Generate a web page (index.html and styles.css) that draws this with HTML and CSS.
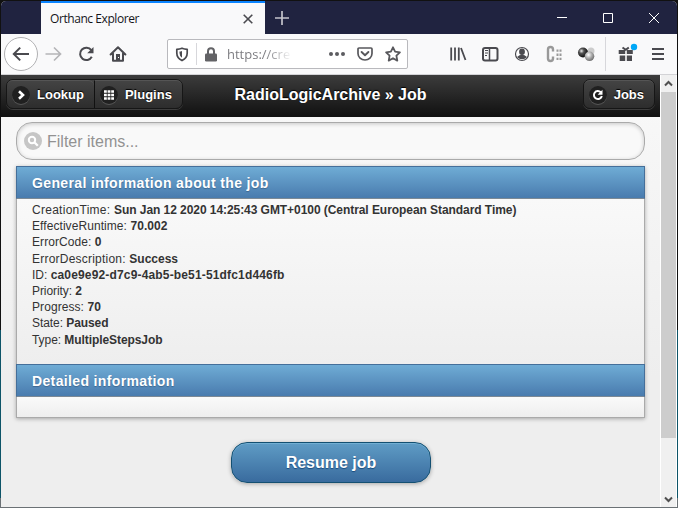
FILE: index.html
```html
<!DOCTYPE html>
<html lang="en">
<head>
<meta charset="utf-8">
<title>Orthanc Explorer</title>
<link rel="stylesheet" href="styles.css">
</head>
<body>
<div class="window">
  <div class="tabstrip">
    <div class="tab">
      <span class="tab-title">Orthanc Explorer</span>
      <svg class="tab-close" width="10" height="10" viewBox="0 0 10 10"><path d="M.7.7l8.6 8.6M9.3.7L.7 9.3" fill="none" stroke="#4a4a4f" stroke-width="1.6"/></svg>
    </div>
    <svg class="newtab" width="14" height="14" viewBox="0 0 14 14"><path d="M7 0v14M0 7h14" stroke="#c4c4cb" stroke-width="1.7"/></svg>
    <div class="controls">
      <svg width="46" height="32" viewBox="0 0 46 32"><path d="M18 15.5h10" stroke="#fff"/></svg>
      <svg width="46" height="32" viewBox="0 0 46 32"><path d="M18.5 11.5h9v9h-9z" fill="none" stroke="#fff"/></svg>
      <svg width="46" height="32" viewBox="0 0 46 32"><path d="M18 11l10 10M28 11L18 21" stroke="#fff"/></svg>
    </div>
  </div>

  <div class="toolbar">
    <div class="back"><svg width="18" height="16" viewBox="0 0 18 16"><path d="M17 8H2M8.2 1.6L1.8 8l6.400 6.400" fill="none" stroke="#4a4a4f" stroke-width="2"/></svg></div>
    <svg class="slot" width="32" height="32" viewBox="0 0 32 32"><path d="M8.500 16H23M17 9.500l6.500 6.500-6.500 6.500" fill="none" stroke="#b5b5b8" stroke-width="1.700"/></svg>
    <svg class="slot" width="32" height="32" viewBox="0 0 32 32"><path d="M21.300 12.200a6.200 6.200 0 1 0 .500 6.600" fill="none" stroke="#4a4a4f" stroke-width="2"/><path d="M23.500 9v6.300h-6.300z" fill="#4a4a4f"/></svg>
    <svg class="slot" width="32" height="32" viewBox="0 0 32 32"><path d="M8.600 16.500L16 9.300l7.400 7.200M11 15.500v7.300h10v-7.300" fill="none" stroke="#4a4a4f" stroke-width="2" stroke-linejoin="round" stroke-linecap="round"/><path d="M14 16h4v7h-4z" fill="#4a4a4f"/><path d="M16 19.500h1" stroke="#fff"/></svg>
    <div class="urlbar">
      <svg class="shield" width="14" height="15" viewBox="0 0 14 15"><path d="M1.800 2.300Q4.500 2 7 1.200q2.500.800 5.200 1.100v3.600q0 5-5.200 7.700-5.200-2.700-5.200-7.700z" fill="none" stroke="#4a4a4f" stroke-width="1.700" stroke-linejoin="round"/><path d="M7 4q-1.300.500-2.500.600v1.300q0 3 2.500 4.800z" fill="#4a4a4f"/></svg>
      <i class="url-rule"></i>
      <svg class="lock" width="12" height="15" viewBox="0 0 12 15"><path d="M3 7V4.300a3 3 0 0 1 6 0V7" fill="none" stroke="#636366" stroke-width="2"/><rect y="6.500" width="12" height="8" rx="1.300" fill="#636366"/></svg>
      <span class="url">https://cre</span>
      <svg class="dots" width="16" height="4" viewBox="0 0 16 4"><g fill="#5c5c60"><circle cx="2" cy="2" r="2"/><circle cx="8" cy="2" r="2"/><circle cx="14" cy="2" r="2"/></g></svg>
      <svg class="pocket" width="16" height="14" viewBox="0 0 16 14"><path d="M2 1h12q1 0 1 1v4.500a7 6.500 0 0 1-14 0V2q0-1 1-1z" fill="none" stroke="#58585c" stroke-width="1.700"/><path d="M4.600 5L8 8.200 11.400 5" fill="none" stroke="#58585c" stroke-width="1.900" stroke-linecap="round" stroke-linejoin="round"/></svg>
      <svg class="star" width="16" height="16" viewBox="0 0 16 16"><path d="M8 1.300l2.100 4.400 4.800.600-3.500 3.400.900 4.900L8 12.200l-4.300 2.400.900-4.900L1.100 6.300l4.800-.600z" fill="none" stroke="#58585c" stroke-width="1.800" stroke-linejoin="round"/></svg>
    </div>
    <div class="addons">
      <svg width="32" height="32" viewBox="0 0 32 32"><path d="M9.200 9.500v13M13 9.500v13M16.800 9.500v13M19 10l4.500 12" stroke="#4a4a4f" stroke-width="1.800"/></svg>
      <svg width="32" height="32" viewBox="0 0 32 32"><rect x="9" y="10" width="14.500" height="12.500" rx="2" fill="none" stroke="#4a4a4f" stroke-width="2"/><path d="M15.500 10v12" stroke="#4a4a4f" stroke-width="1.500"/><path d="M11 12.500h3M11 15h3M11 17.500h2" stroke="#4a4a4f"/></svg>
      <svg width="32" height="32" viewBox="0 0 32 32"><circle cx="16" cy="16" r="6.500" fill="#fff" stroke="#4a4a4f" stroke-width="1.200"/><ellipse cx="16" cy="13.800" rx="2.900" ry="3.200" fill="#4a4a4f"/><path d="M11 19q2.500-2.200 5-2.200t5 2.200q-2 2.300-5 2.300t-5-2.300z" fill="#4a4a4f"/></svg>
      <svg width="32" height="32" viewBox="0 0 32 32"><path d="M15 13.500v-2a2.500 2.500 0 0 0-5 0v9a2.500 2.500 0 0 0 5 0v-2" fill="none" stroke="#999" stroke-width="2.400"/><path d="M19.500 11.500v11M22.500 11.500v11" stroke="#999" stroke-width="2" stroke-dasharray="2.300 1.800"/></svg>
      <svg width="32" height="32" viewBox="0 0 32 32"><defs><radialGradient id="dark" cx=".35" cy=".35" r=".6"><stop stop-color="#eee"/><stop offset=".4" stop-color="#555"/><stop offset="1" stop-color="#151515"/></radialGradient><radialGradient id="light" cx=".4" cy=".35" r=".7"><stop stop-color="#fff"/><stop offset=".5" stop-color="#aaa"/><stop offset="1" stop-color="#666"/></radialGradient></defs><circle cx="21" cy="13" r="3.500" fill="#ccc"/><circle cx="13" cy="14.500" r="5" fill="url(#dark)"/><circle cx="19.500" cy="18.300" r="4.800" fill="url(#light)"/></svg>
    </div>
    <i class="rule"></i>
    <svg class="gift" width="32" height="32" viewBox="0 0 32 32"><path d="M8.700 12h6.500v4H8.700zM16.800 12h6v4h-6zM9.700 17.500h5.500V23H9.700zM16.800 17.500h5.200V23h-5.200z" fill="#4a4a4f"/><path d="M12.500 9.500l3.300 2.300 3-2.300" fill="none" stroke="#4a4a4f" stroke-width="2"/><circle cx="24" cy="9" r="3.200" fill="#00a7f7"/></svg>
    <svg class="menu" width="32" height="32" viewBox="0 0 32 32"><path d="M10 11h12M10 16h12M10 21h12" stroke="#4a4a4f" stroke-width="1.800"/></svg>
  </div>

  <div class="viewport">
    <main class="page">
      <header class="bar">
        <div class="group">
          <a class="btn"><span class="disc"><svg width="18" height="18" viewBox="0 0 18 18"><path d="M7 5.200l4 3.800-4 3.800" fill="none" stroke="#fff" stroke-width="2.600"/></svg></span>Lookup</a>
          <a class="btn"><span class="disc"><svg width="18" height="18" viewBox="0 0 18 18"><path d="M4 5.500h10M4 9h10M4 12.500h10" stroke="#fff" stroke-width="2.600" stroke-dasharray="2.800 .800"/></svg></span>Plugins</a>
        </div>
        <h1>RadioLogicArchive » Job</h1>
        <div class="group group-end">
          <a class="btn"><span class="disc"><svg width="18" height="18" viewBox="0 0 18 18"><path d="M11.800 6.300a4 4 0 1 0 1 3.700" fill="none" stroke="#fff" stroke-width="2"/><path d="M13.500 3.800v5H8.600z" fill="#fff"/></svg></span>Jobs</a>
        </div>
      </header>
      <div class="content">
        <div class="filter">
          <svg width="18" height="18" viewBox="0 0 18 18"><circle cx="9" cy="9" r="9" fill="#c6c6c6"/><circle cx="8" cy="8" r="3.200" fill="none" stroke="#fff" stroke-width="2"/><path d="M10.300 10.300l3.500 3.500" stroke="#fff" stroke-width="2.300"/></svg>
          <span>Filter items...</span>
        </div>
        <section class="list">
          <h2>General information about the job</h2>
          <div class="details">
            <p class="created"><span>CreationTime: </span><b>Sun Jan 12 2020 14:25:43 GMT+0100 (Central European Standard Time)</b></p>
            <p class="runtime">EffectiveRuntime: <b>70.002</b></p>
            <p class="runtime">ErrorCode: <b>0</b></p>
            <p class="description"><span>ErrorDescription: </span><b>Success</b></p>
            <p class="identifier">ID: <b>ca0e9e92-d7c9-4ab5-be51-51dfc1d446fb</b></p>
            <p class="tight">Priority: <b>2</b></p>
            <p class="runtime">Progress: <b>70</b></p>
            <p class="tight">State: <b>Paused</b></p>
            <p class="tight">Type: <b>MultipleStepsJob</b></p>
          </div>
          <h2>Detailed information</h2>
          <div class="empty"></div>
        </section>
        <button class="resume">Resume job</button>
      </div>
    </main>
    <div class="scrollbar">
      <svg width="15" height="17" viewBox="0 0 15 17"><path d="M4 10.500L7.500 7l3.500 3.500" fill="none" stroke="#505050" stroke-width="2"/></svg>
      <div class="thumb"></div>
      <svg width="15" height="17" viewBox="0 0 15 17"><path d="M4 7.500L7.500 11 11 7.500" fill="none" stroke="#505050" stroke-width="2"/></svg>
    </div>
  </div>
</div>
</body>
</html>
```

FILE: styles.css
```css
* { box-sizing: border-box; }

body {
  margin: 0;
  width: 678px;
  height: 508px;
  overflow: hidden;
  padding: 1px 1px 0;
  background: linear-gradient(#111 0 65%, #0d5468 65% 98%, #6b7175 98%);
  font-family: "Liberation Sans", Arial, sans-serif;
}

svg { display: block; flex: none; }

.window {
  width: 676px;
  height: 506px;
  display: flex;
  flex-direction: column;
  border-radius: 5px 5px 0 0;
  overflow: hidden;
  background: #f9f9fa;
}

.tabstrip {
  height: 33px;
  flex: none;
  display: flex;
  align-items: center;
  padding-left: 40px;
  background: #202340;
}
.tab {
  width: 224px;
  height: 33px;
  display: flex;
  align-items: center;
  justify-content: space-between;
  padding: 0 12px 0 9px;
  border-top: 2px solid #0a84ff;
  background: #f9f9fa;
}
.tab-title {
  font: 12px/16px "Open Sans", sans-serif;
  letter-spacing: -.43px;
  color: #15151a;
}
.tab-close { margin-top: 1px; }
.newtab { margin-left: 10px; }
.controls { display: flex; margin-left: auto; }

.toolbar {
  height: 41px;
  flex: none;
  display: flex;
  align-items: center;
  padding-left: 3px;
  border-bottom: 1px solid #d3d3d6;
  background: #f9f9fa;
}
.back {
  width: 34px;
  height: 34px;
  display: flex;
  align-items: center;
  justify-content: center;
  border: 1px solid #b1b1b3;
  border-radius: 50%;
  background: #fff;
}
.back + .slot { margin-right: 1px; margin-left: -1px; }
.urlbar {
  width: 241px;
  height: 30px;
  margin-left: 33px;
  display: flex;
  align-items: center;
  border: 1px solid #b9b9bd;
  border-radius: 2px;
  background: #fff;
}
.shield { margin-left: 7px; }
.url-rule { width: 1px; height: 22px; margin-left: 7px; background: #d7d7db; }
.lock { margin-left: 8px; }
.url {
  width: 66px;
  margin-left: 10px;
  overflow: hidden;
  font: 13px/18px "Open Sans", sans-serif;
  color: transparent;
  background: linear-gradient(90deg, #77777c 58%, #fff 98%);
  background-clip: text;
}
.dots { margin-left: 36px; }
.pocket { margin-left: 12px; }
.star { margin-left: 12px; }
.addons { display: flex; margin-left: 34px; }
.rule { width: 1px; height: 34px; margin-left: 3px; background: #d7d7db; }
.gift { margin-left: 4px; }

.viewport { flex: 1; display: flex; min-height: 0; }
.page {
  width: 659px;
  background: linear-gradient(#f9f9f9, #eee 70%);
}
.bar {
  height: 42px;
  display: grid;
  grid-template-columns: 1fr auto 1fr;
  align-items: center;
  padding: 0 5px 3px;
  border-bottom: 1px solid #111;
  background: linear-gradient(#3c3c3c, #111);
  color: #fff;
}
.bar h1 {
  margin: 2px 0 0;
  font-size: 16px;
  line-height: 20px;
  text-shadow: 0 -1px 1px #000;
}
.group {
  display: flex;
  height: 30px;
  justify-self: start;
  border: 1px solid #161616;
  border-radius: 7px;
  background: linear-gradient(#444, #2d2d2d);
  box-shadow: 0 1px 0 #3d3d3d;
}
.group-end { justify-self: end; }
.btn {
  display: flex;
  align-items: center;
  padding: 0 10px 0 5px;
  border-top: 1px solid #555;
  border-radius: 6px;
  font-size: 13px;
  font-weight: bold;
  text-shadow: 0 -1px 1px #000;
}
.btn + .btn { border-left: 1px solid #111; border-radius: 0 6px 6px 0; }
.disc {
  margin-right: 7px;
  border-radius: 50%;
  background: #202020;
  box-shadow: 0 1px 0 #565656;
}

.content {
  display: flex;
  flex-direction: column;
  padding: 5px 15px 0;
}
.filter {
  height: 38px;
  display: flex;
  align-items: center;
  gap: 5px;
  padding-left: 7px;
  border: 1px solid #aaa;
  border-radius: 16px;
  background: #f9f9f9;
  box-shadow: inset 0 1px 4px rgba(0, 0, 0, .2);
  font-size: 16px;
  color: #929292;
}
.filter span { margin-top: 2px; }
.list {
  margin-top: 6px;
  box-shadow: 0 1px 4px rgba(0, 0, 0, .3);
}
.list h2 {
  height: 33px;
  margin: 0;
  padding-left: 15px;
  border: 1px solid #456f9a;
  border-bottom-color: #7c8995;
  background: linear-gradient(#6facd5, #497bae);
  font-size: 14px;
  letter-spacing: .36px;
  line-height: 32px;
  color: #fff;
  text-shadow: 0 1px 1px #3e6790;
}
.details, .empty {
  border: 1px solid #aaa;
  border-top: 0;
}
.details {
  height: 165px;
  padding: 3px 15px 0;
  border-bottom: 0;
  background: linear-gradient(#f9f9f9, #eee);
  font-size: 12px;
  line-height: 16.2px;
  color: #333;
}
.details p { margin: 0; white-space: nowrap; }
.created span { letter-spacing: .27px; }
.created b { letter-spacing: -.06px; }
.runtime { letter-spacing: .07px; }
.description span { letter-spacing: .22px; }
.identifier b { letter-spacing: .16px; }
.tight { letter-spacing: -.07px; }
.empty { height: 21px; background: linear-gradient(#fafafa, #eee); }
.resume {
  width: 200px;
  height: 41px;
  margin: 24px 0 0 1px;
  align-self: center;
  border: 1px solid #145072;
  border-radius: 16px;
  background: linear-gradient(#5f9cc5, #396b9e);
  box-shadow: inset 0 1px 0 #72afd3, 0 1px 4px rgba(0, 0, 0, .3);
  font: bold 16px "Liberation Sans", Arial, sans-serif;
  color: #fff;
  text-shadow: 0 1px 1px #194b7e;
}

.scrollbar {
  width: 17px;
  display: flex;
  flex-direction: column;
  border: solid #fff;
  border-width: 0 1px;
  background: #f0f0f0;
}
.thumb { height: 346px; margin-bottom: auto; background: #cdcdcd; }
```
